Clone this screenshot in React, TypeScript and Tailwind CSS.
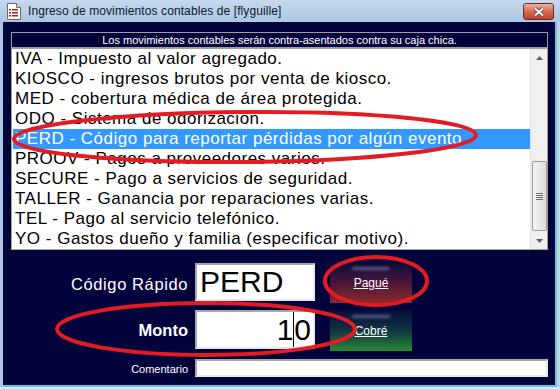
const items = [
  'IVA - Impuesto al valor agregado.',
  'KIOSCO - ingresos brutos por venta de kiosco.',
  'MED - cobertura médica de área protegida.',
  'ODO - Sistema de odorización.',
  'PERD - Código para reportar pérdidas por algún evento',
  'PROOV - Pagos a proveedores varios.',
  'SECURE - Pago a servicios de seguridad.',
  'TALLER - Ganancia por reparaciones varias.',
  'TEL - Pago al servicio telefónico.',
  'YO - Gastos dueño y familia (especificar motivo).',
];

function DocIcon() {
  return (
    <svg width="16" height="17" viewBox="0 0 16 17">
      <path d="M1.5 0.5h9l4 4v12h-13z" fill="#fbfbfb" stroke="#6b6b6b" />
      <path d="M10.5 0.5v4h4" fill="#e4e4e4" stroke="#6b6b6b" />
      <rect x="3" y="6" width="2" height="1.5" fill="#c81818" />
      <rect x="6" y="6" width="6" height="1.5" fill="#c81818" />
      <rect x="3" y="9" width="2" height="1.5" fill="#c81818" />
      <rect x="6" y="9" width="6" height="1.5" fill="#c81818" />
      <rect x="3" y="12" width="2" height="1.5" fill="#c81818" />
      <rect x="6" y="12" width="6" height="1.5" fill="#c81818" />
    </svg>
  );
}

function Scrollbar() {
  return (
    <div className="w-[17px] h-full bg-[#f0f0f0] border-l border-[#e3e3e3] flex flex-col items-center">
      <div className="h-[17px] flex items-center justify-center">
        <svg width="7" height="4" viewBox="0 0 7 4"><path d="M0 4L3.5 0L7 4z" fill="#606060" /></svg>
      </div>
      <div className="h-[95px]" />
      <div className="w-[15px] h-[70px] rounded-[2px] border border-[#9a9a9a] bg-gradient-to-r from-[#f4f4f4] to-[#dcdcdc] flex flex-col items-center justify-center gap-[1px]">
        <div className="w-[7px] h-[1px] bg-[#6e6e6e]" />
        <div className="w-[7px] h-[1px] bg-[#6e6e6e]" />
        <div className="w-[7px] h-[1px] bg-[#6e6e6e]" />
        <div className="w-[7px] h-[1px] bg-[#6e6e6e]" />
      </div>
      <div className="flex-1" />
      <div className="h-[17px] flex items-center justify-center">
        <svg width="7" height="4" viewBox="0 0 7 4"><path d="M0 0L3.5 4L7 0z" fill="#606060" /></svg>
      </div>
    </div>
  );
}

function GlassButton({ label, from, via, to }: { label: string; from: string; via: string; to: string }) {
  return (
    <div className={`relative w-[82px] h-[41px] flex items-center justify-center bg-gradient-to-b ${from} ${via} ${to} overflow-hidden`}>
      <div className="absolute top-[5px] left-[22px] w-[38px] h-[3px] rounded-full bg-[#c8c0f0] opacity-40 blur-[1.5px]" />
      <span className="relative text-[12px] text-white leading-none underline underline-offset-1">{label}</span>
    </div>
  );
}

export default function App() {
  return (
    <div className="relative w-[560px] h-[389px] overflow-hidden bg-[#dce6ef] font-['Liberation_Sans',Arial,sans-serif]">
      <div className="h-[22px] flex items-center bg-gradient-to-b from-[#c6d9ee] to-[#aac6e3] pl-[6px] pr-[6px]">
        <DocIcon />
        <span className="ml-[6px] text-[12px] text-[#101828] tracking-[0.1px]">Ingreso de movimientos contables de [flyguille]</span>
        <div className="ml-auto mt-[1px] w-[31px] h-[17px] rounded-[3px] border border-[#6e2a24] bg-gradient-to-b from-[#eab2a4] via-[#d66a55] to-[#c2412c] flex items-center justify-center">
          <svg width="12" height="10" viewBox="0 0 12 10">
            <path d="M2 1.5L10 8.5M10 1.5L2 8.5" stroke="#5a2a24" strokeWidth="3.6" />
            <path d="M2 1.5L10 8.5M10 1.5L2 8.5" stroke="#ffffff" strokeWidth="2.2" />
          </svg>
        </div>
      </div>

      <div className="flex h-[365px]">
        <div className="w-[3px] bg-[#aac6e3]" />
        <div className="w-[554px] bg-[#03033c] border-r-2 border-b-2 border-[#5fc7ea] pl-[8px] pt-[10px] flex flex-col">
          <div className="w-[537px] h-[16px] border border-[#9a9aa8] flex items-center justify-center text-[11px] text-white leading-none">
            Los movimientos contables serán contra-asentados contra su caja chica.
          </div>
          <div className="w-[537px] h-[202px] bg-white border border-[#a0a0a0] flex">
            <div className="flex-1 pl-[1px]">
              {items.map((t, i) => (
                <div
                  key={t}
                  className={`h-[20px] pl-[2px] text-[17px] tracking-[0.5px] leading-[20px] whitespace-nowrap ${i === 4 ? 'bg-[#3399ff] text-white' : 'text-black'}`}
                >
                  {t}
                </div>
              ))}
            </div>
            <Scrollbar />
          </div>

          <div className="mt-[12px] flex items-start">
            <div className="w-[177px] h-[40px] flex items-end justify-end pb-[5px] text-[16.5px] tracking-[0.6px] text-white">Código Rápido</div>
            <div className="ml-[7px] mt-[1px] w-[120px] h-[38px] bg-white border-2 border-t-[#a8a8a8] border-l-[#a8a8a8] border-r-[#e8e8e8] border-b-[#e8e8e8] pl-[3px] flex items-center text-[30px] leading-none text-black">
              PERD
            </div>
            <div className="ml-[15px]">
              <GlassButton label="Pagué" from="from-[#08063a]" via="via-[#4a1438]" to="to-[#8c2a28]" />
            </div>
          </div>

          <div className="mt-[7px] flex items-start">
            <div className="w-[177px] h-[39px] flex items-end justify-end pb-[6px] text-[16.5px] font-bold text-white">Monto</div>
            <div className="ml-[7px] w-[120px] h-[39px] bg-white border-2 border-t-[#a8a8a8] border-l-[#a8a8a8] border-r-[#e8e8e8] border-b-[#e8e8e8] pr-[2px] flex items-center justify-end text-[30px] leading-none text-black">
              <span>1</span>
              <span className="w-[1px] h-[35px] bg-black" />
              <span>0</span>
            </div>
            <div className="ml-[15px]">
              <GlassButton label="Cobré" from="from-[#080a3c]" via="via-[#123440]" to="to-[#2a882a]" />
            </div>
          </div>

          <div className="mt-[8px] flex items-end">
            <div className="w-[177px] text-right text-[11px] leading-none pb-[2px] text-white">Comentario</div>
            <div className="ml-[7px] w-[353px] h-[18px] bg-white border-2 border-t-[#a8a8a8] border-l-[#a8a8a8] border-r-[#e8e8e8] border-b-[#e8e8e8]" />
          </div>
        </div>
        <div className="flex-1 bg-[#c8d0d8]" />
      </div>

      <svg className="absolute inset-0 pointer-events-none" width="560" height="389" viewBox="0 0 560 389">
        <g fill="none" stroke="#e41b23" strokeWidth="4">
          <ellipse cx="245" cy="137" rx="231" ry="25" transform="rotate(-0.5 245 137)" />
          <ellipse cx="376" cy="281" rx="51" ry="24" />
          <ellipse cx="206" cy="329" rx="149" ry="26" />
        </g>
      </svg>
    </div>
  );
}
